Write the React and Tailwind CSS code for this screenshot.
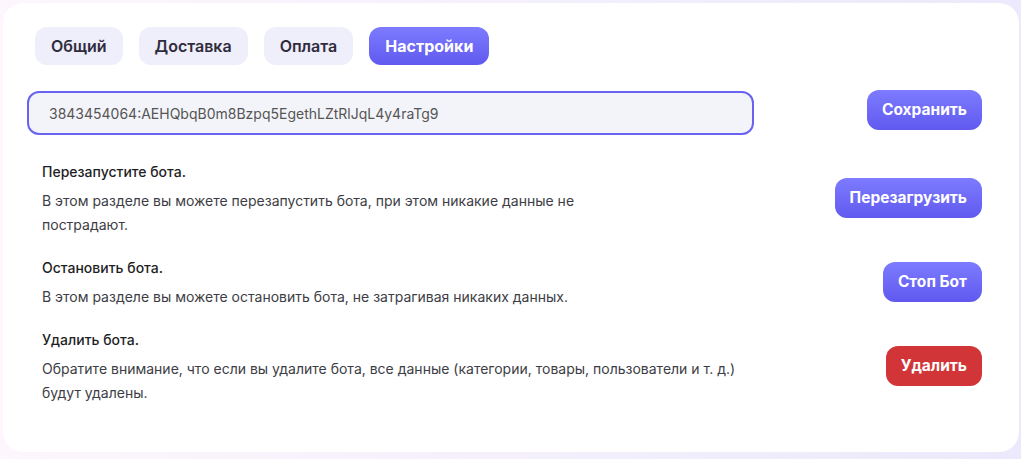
import { useState } from "react";

const tabs = ["Общий", "Доставка", "Оплата", "Настройки"];

const actions = [
  {
    title: "Перезапустите бота.",
    text: "В этом разделе вы можете перезапустить бота, при этом никакие данные не пострадают.",
    width: "w-[560px]",
    button: "Перезагрузить",
    danger: false,
  },
  {
    title: "Остановить бота.",
    text: "В этом разделе вы можете остановить бота, не затрагивая никаких данных.",
    width: "w-[720px]",
    button: "Стоп Бот",
    danger: false,
  },
  {
    title: "Удалить бота.",
    text: "Обратите внимание, что если вы удалите бота, все данные (категории, товары, пользователи и т. д.) будут удалены.",
    width: "w-[720px]",
    button: "Удалить",
    danger: true,
  },
];

const PrimaryButton = ({ children, danger }) => (
  <button
    className={
      danger
        ? "h-10 px-[15px] rounded-[12px] bg-[#d23538] text-white text-[15.5px] font-bold"
        : "h-10 px-[15px] rounded-[12px] bg-gradient-to-b from-[#7d7bff] to-[#6159ef] text-white text-[15.5px] font-bold"
    }
  >
    {children}
  </button>
);

const App = () => {
  const [active, setActive] = useState(3);
  const [token, setToken] = useState(
    "3843454064:AEHQbqB0m8Bzpq5EgethLZtRlJqL4y4raTg9"
  );

  return (
    <div
      className="w-[1021px] h-[459px] bg-gradient-to-r from-[#fdf6fc] to-[#ebe9fb] pt-[3px] pl-[3px] pr-[2px]"
      style={{ fontFamily: "Inter, 'Noto Sans', sans-serif" }}
    >
      <div className="h-[449px] bg-white rounded-[20px] pt-6 pl-6 pr-[37px]">
        {/* Tabs */}
        <div className="flex gap-4 ml-2">
          {tabs.map((t, i) => (
            <button
              key={t}
              onClick={() => setActive(i)}
              className={
                i === active
                  ? "h-[38px] px-4 rounded-[12px] bg-gradient-to-b from-[#7d7bff] to-[#6159ef] text-white text-[16px] font-bold"
                  : "h-[38px] px-4 rounded-[12px] bg-[#efeefb] text-[#2f2d3b] text-[16px] font-semibold"
              }
            >
              {t}
            </button>
          ))}
        </div>

        {/* Token */}
        <div className="flex items-start justify-between mt-[26px]">
          <input
            value={token}
            onChange={(e) => setToken(e.target.value)}
            className="w-[727px] h-[44px] rounded-[12px] border-2 border-[#6a63f1] bg-[#f3f4f9] pl-5 text-[14px] text-[#555] outline-none"
          />
          <div className="-mt-px">
            <PrimaryButton>Сохранить</PrimaryButton>
          </div>
        </div>

        {/* Actions */}
        <div className="mt-[27px] flex flex-col gap-[21px] pl-[15px]">
          {actions.map((a) => (
            <div key={a.title} className="flex items-center justify-between">
              <div className={a.width}>
                <p className="text-[14px] leading-5 font-medium text-[#1e1e24]">
                  {a.title}
                </p>
                <p className="mt-[7px] text-[14px] leading-6 text-[#3d3d45]">
                  {a.text}
                </p>
              </div>
              <div className="-mt-1">
                <PrimaryButton danger={a.danger}>{a.button}</PrimaryButton>
              </div>
            </div>
          ))}
        </div>
      </div>
    </div>
  );
};

export default App;
